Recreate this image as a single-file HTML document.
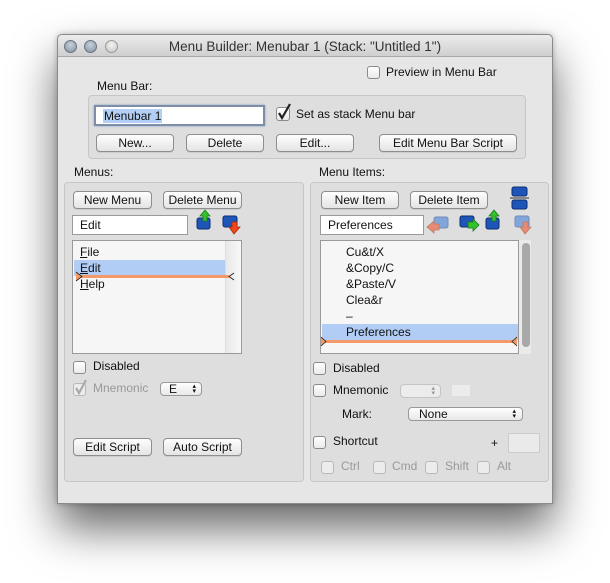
<!DOCTYPE html>
<html><head><meta charset="utf-8"><style>
*{box-sizing:border-box;margin:0;padding:0}
body{width:610px;height:583px;background:#fff;position:relative;overflow:hidden;font-family:"Liberation Sans","DejaVu Sans",sans-serif;font-size:12px;line-height:17px;color:#111}
.a{position:absolute}
#win{left:57px;top:34px;width:496px;height:470px;background:#e6e6e6;border:1px solid #8a8a8a;border-radius:5px 5px 0 0;box-shadow:0 24px 45px rgba(0,0,0,0.6),0 0 6px rgba(0,0,0,0.25)}
#tb{left:0;top:0;width:494px;height:22px;background:linear-gradient(#ececec,#cfcfcf);border-bottom:1px solid #a8a8a8;border-radius:5px 5px 0 0;text-align:center;font-size:13.5px;line-height:23px;color:#333}
.tl{width:13px;height:13px;border-radius:50%;top:5px;background:radial-gradient(circle at 50% 35%,#c8d2dc,#7f8fa0);border:1px solid #6b7480}
.grp{border:1px solid #c6c6c6;border-radius:4px;background:#dedede}
.btn{height:18px;border:1px solid #8e8e8e;border-radius:4px;background:linear-gradient(#fefefe,#e4e4e4);text-align:center;line-height:17px;font-size:12px;box-shadow:0 1px 0 rgba(0,0,0,0.08)}
.fld{background:#fff;border:1px solid #9a9a9a;line-height:19px;padding-left:7px}
.cb{width:13px;height:13px;border:1px solid #8a8a8a;border-radius:3px;background:linear-gradient(#fff,#eaeaea)}
.cbg{border-color:#b8b8b8;background:#ececec}
.gray{color:#999}
.list{background:#f6f6f6;border:1px solid #9a9a9a}
.pop{height:14px;border:1px solid #999;border-radius:4px;background:linear-gradient(#fff,#e8e8e8);font-size:12px;line-height:13px}
</style></head><body>
<div id="win" class="a">
<div id="tb" class="a">Menu Builder: Menubar 1 (Stack: "Untitled 1")</div>
<div class="a tl" style="left:6px"></div><div class="a tl" style="left:26px"></div><div class="a tl" style="left:47px;background:radial-gradient(circle at 50% 35%,#f4f4f4,#c4c4c4);border-color:#9a9a9a"></div>
</div>

<div class="a cb" style="left:367px;top:66px"></div>
<div class="a" style="left:386px;top:64px">Preview in Menu Bar</div>
<div class="a" style="left:97px;top:78px">Menu Bar:</div>
<div class="a grp" style="left:88px;top:95px;width:438px;height:64px"></div>
<div class="a fld" style="left:94px;top:105px;width:171px;height:21px;border:2px solid #7d8ea6;box-shadow:0 0 2px #7f9cc8"><span style="background:#b3cff5;padding:0 1px">Menubar 1</span></div>
<div class="a cb" style="left:276px;top:107px;width:14px;height:14px"></div>
<svg class="a" style="left:276px;top:103px" width="16" height="18"><path d="M3 10 L6 15 L14 1" fill="none" stroke="#222" stroke-width="2.2"/></svg>
<div class="a" style="left:296px;top:106px">Set as stack Menu bar</div>
<div class="a btn" style="left:96px;top:134px;width:78px">New...</div>
<div class="a btn" style="left:186px;top:134px;width:78px">Delete</div>
<div class="a btn" style="left:276px;top:134px;width:78px">Edit...</div>
<div class="a btn" style="left:379px;top:134px;width:138px">Edit Menu Bar Script</div>

<div class="a" style="left:74px;top:164px">Menus:</div>
<div class="a grp" style="left:64px;top:182px;width:240px;height:300px"></div>
<div class="a btn" style="left:73px;top:191px;width:79px">New Menu</div>
<div class="a btn" style="left:163px;top:191px;width:79px">Delete Menu</div>
<div class="a fld" style="left:72px;top:215px;width:116px;height:20px">Edit</div>
<svg class="a" style="left:194px;top:208px" width="50" height="30">
<rect x="3" y="10" width="13" height="11" rx="2" fill="#1d56b8" stroke="#0d2f70"/>
<path d="M9 13 V8 H6 L11 2 L16 8 H13 V13Z" fill="#34c22c" stroke="#1a7a18" stroke-width=".8"/>
<rect x="29" y="8" width="14" height="11" rx="2" fill="#1d56b8" stroke="#0d2f70"/>
<path d="M38 14 V19 H35 L40 26 L46 19 H43 V14Z" fill="#f2471a" stroke="#a02a0a" stroke-width=".8"/>
</svg>
<div class="a list" style="left:72px;top:240px;width:170px;height:114px"></div>
<div class="a" style="left:225px;top:241px;width:16px;height:112px;background:linear-gradient(90deg,#e8e8e8,#f8f8f8);border-left:1px solid #ddd"></div>
<div class="a" style="left:74px;top:260px;width:151px;height:16px;background:#b1cdf5"></div>
<div class="a" style="left:80px;top:244px"><u>F</u>ile</div>
<div class="a" style="left:80px;top:260px"><u>E</u>dit</div>
<div class="a" style="left:80px;top:276px"><u>H</u>elp</div>
<div class="a" style="left:77px;top:275px;width:152px;height:3px;background:#f39a68"></div>
<svg class="a" style="left:74px;top:270px" width="170" height="14"><path d="M2 2 L8 6.5 L2 11" fill="#f39a68" stroke="#222" stroke-width=".8"/><path d="M160 3 L155 6.5 L160 10" fill="none" stroke="#222" stroke-width=".9"/></svg>
<div class="a cb" style="left:73px;top:361px"></div>
<div class="a" style="left:93px;top:358px">Disabled</div>
<div class="a cb cbg" style="left:73px;top:383px"></div>
<svg class="a" style="left:73px;top:378px" width="16" height="18"><path d="M3 10 L6 15 L13 2" fill="none" stroke="#aaa" stroke-width="2.2"/></svg>
<div class="a gray" style="left:93px;top:380px">Mnemonic</div>
<div class="a pop" style="left:160px;top:382px;width:42px;padding-left:8px">E<span style="position:absolute;right:5px;top:1px;font-size:7px;line-height:5px">▴<br>▾</span></div>
<div class="a btn" style="left:73px;top:438px;width:79px">Edit Script</div>
<div class="a btn" style="left:163px;top:438px;width:79px">Auto Script</div>

<div class="a" style="left:319px;top:164px">Menu Items:</div>
<div class="a grp" style="left:310px;top:182px;width:239px;height:300px"></div>
<div class="a btn" style="left:321px;top:191px;width:78px">New Item</div>
<div class="a btn" style="left:410px;top:191px;width:78px">Delete Item</div>
<svg class="a" style="left:510px;top:186px" width="20" height="25">
<rect x="2" y="1" width="15" height="9" rx="2" fill="#1d56b8" stroke="#0d2f70"/>
<line x1="0" y1="12" x2="19" y2="12" stroke="#333"/>
<rect x="2" y="14" width="15" height="9" rx="2" fill="#1d56b8" stroke="#0d2f70"/>
</svg>
<div class="a fld" style="left:320px;top:215px;width:104px;height:20px">Preferences</div>
<svg class="a" style="left:424px;top:208px" width="112" height="30">
<g opacity=".55"><rect x="10" y="9" width="14" height="11" rx="2" fill="#3a7ad8" stroke="#1a4a9a"/>
<path d="M15 16 H10 V13 L3 19 L10 25 V22 H15Z" fill="#f2471a" stroke="#a02a0a" stroke-width=".8"/></g>
<rect x="36" y="8" width="14" height="11" rx="2" fill="#1d56b8" stroke="#0d2f70"/>
<path d="M44 14 H49 V11 L55 17 L49 23 V20 H44Z" fill="#34c22c" stroke="#1a7a18" stroke-width=".8"/>
<rect x="62" y="10" width="13" height="11" rx="2" fill="#1d56b8" stroke="#0d2f70"/>
<path d="M68 13 V8 H65 L70 2 L75 8 H72 V13Z" fill="#34c22c" stroke="#1a7a18" stroke-width=".8"/>
<g opacity=".55"><rect x="91" y="8" width="14" height="11" rx="2" fill="#3a7ad8" stroke="#1a4a9a"/>
<path d="M99 14 V19 H96 L101 26 L107 19 H104 V14Z" fill="#f2471a" stroke="#a02a0a" stroke-width=".8"/></g>
</svg>
<div class="a list" style="left:320px;top:240px;width:199px;height:114px"></div>
<div class="a" style="left:519px;top:240px;width:12px;height:114px;background:#eaeaea"></div>
<div class="a" style="left:522px;top:243px;width:8px;height:104px;border-radius:4px;background:#a8a8a8"></div>
<div class="a" style="left:322px;top:324px;width:196px;height:16px;background:#b1cdf5"></div>
<div class="a" style="left:346px;top:244px">Cu&amp;t/X</div>
<div class="a" style="left:346px;top:260px">&amp;Copy/C</div>
<div class="a" style="left:346px;top:276px">&amp;Paste/V</div>
<div class="a" style="left:346px;top:292px">Clea&amp;r</div>
<div class="a" style="left:346px;top:308px">–</div>
<div class="a" style="left:346px;top:324px">Preferences</div>
<div class="a" style="left:323px;top:340px;width:193px;height:3px;background:#f39a68"></div>
<svg class="a" style="left:320px;top:335px" width="200" height="14"><path d="M1 2 L6 6.5 L1 11" fill="#f39a68" stroke="#222" stroke-width=".8"/><path d="M197 2 L192 6.5 L197 11" fill="#f39a68" stroke="#222" stroke-width=".8"/></svg>
<div class="a cb" style="left:313px;top:362px"></div>
<div class="a" style="left:333px;top:360px">Disabled</div>
<div class="a cb" style="left:313px;top:384px"></div>
<div class="a" style="left:333px;top:382px">Mnemonic</div>
<div class="a pop" style="left:400px;top:384px;width:41px;border-color:#c4c4c4;background:#ececec"><span style="position:absolute;right:5px;top:1px;font-size:7px;line-height:5px;color:#999">▴<br>▾</span></div>
<div class="a" style="left:452px;top:385px;width:18px;height:11px;background:#ececec"></div>
<div class="a" style="left:342px;top:406px">Mark:</div>
<div class="a pop" style="left:408px;top:407px;width:115px;padding-left:10px">None<span style="position:absolute;right:6px;top:1px;font-size:7px;line-height:5px">▴<br>▾</span></div>
<div class="a cb" style="left:313px;top:436px"></div>
<div class="a" style="left:333px;top:433px">Shortcut</div>
<div class="a" style="left:491px;top:435px">+</div>
<div class="a" style="left:508px;top:433px;width:32px;height:20px;background:#eaeaea;border:1px solid #ccc"></div>
<div class="a cb cbg" style="left:321px;top:461px"></div><div class="a gray" style="left:341px;top:458px">Ctrl</div>
<div class="a cb cbg" style="left:373px;top:461px"></div><div class="a gray" style="left:392px;top:458px">Cmd</div>
<div class="a cb cbg" style="left:425px;top:461px"></div><div class="a gray" style="left:445px;top:458px">Shift</div>
<div class="a cb cbg" style="left:477px;top:461px"></div><div class="a gray" style="left:497px;top:458px">Alt</div>
</body></html>
